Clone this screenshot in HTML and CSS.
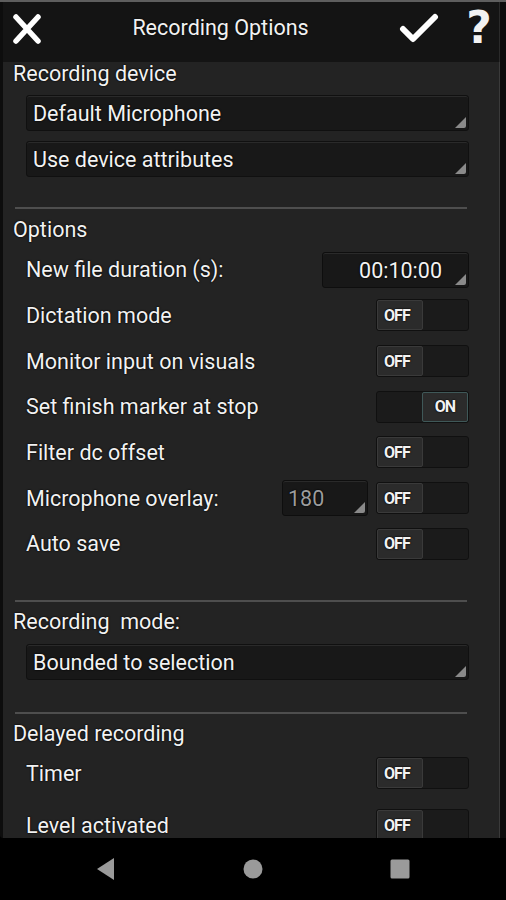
FILE: index.html
```html
<!DOCTYPE html>
<html>
<head>
<meta charset="utf-8">
<link rel="stylesheet" href="styles.css">
</head>
<body>
<div class="screen">
  <div class="topline"></div>
  <div class="dialog">
    <div class="header">
      <svg class="hicon close" width="30" height="32" viewBox="0 0 30 32"><path d="M4 4 L26 28 M26 4 L4 28" stroke="#fff" stroke-width="5.5" stroke-linecap="round" fill="none"/></svg>
      <div class="title">Recording Options</div>
      <svg class="hicon check" width="40" height="30" viewBox="0 0 40 30"><path d="M4 16 L14 26 L36 4" stroke="#fff" stroke-width="6" stroke-linecap="round" stroke-linejoin="round" fill="none"/></svg>
      <div class="help">?</div>
    </div>
    <div class="content">
      <div class="heading h-first">Recording device</div>
      <div class="dropdown dd-1">Default Microphone<span class="corner"></span></div>
      <div class="dropdown dd-2">Use device attributes<span class="corner"></span></div>
      <div class="sep sep-1"></div>
      <div class="heading h-options">Options</div>
      <div class="row">
        <span class="label">New file duration (s):</span>
        <div class="field time">00:10:00<span class="corner"></span></div>
      </div>
      <div class="row">
        <span class="label">Dictation mode</span>
        <div class="toggle"><span class="knob">OFF</span></div>
      </div>
      <div class="row">
        <span class="label">Monitor input on visuals</span>
        <div class="toggle"><span class="knob">OFF</span></div>
      </div>
      <div class="row">
        <span class="label">Set finish marker at stop</span>
        <div class="toggle on"><span class="knob">ON</span></div>
      </div>
      <div class="row">
        <span class="label">Filter dc offset</span>
        <div class="toggle"><span class="knob">OFF</span></div>
      </div>
      <div class="row">
        <span class="label">Microphone overlay:</span>
        <div class="field num">180<span class="corner"></span></div>
        <div class="toggle"><span class="knob">OFF</span></div>
      </div>
      <div class="row">
        <span class="label">Auto save</span>
        <div class="toggle"><span class="knob">OFF</span></div>
      </div>
      <div class="sep sep-2"></div>
      <div class="heading">Recording&nbsp; mode:</div>
      <div class="dropdown dd-3">Bounded to selection<span class="corner"></span></div>
      <div class="sep sep-3"></div>
      <div class="heading h-delayed">Delayed recording</div>
      <div class="row">
        <span class="label">Timer</span>
        <div class="toggle"><span class="knob">OFF</span></div>
      </div>
      <div class="row row-level">
        <span class="label">Level activated</span>
        <div class="toggle"><span class="knob">OFF</span></div>
      </div>
    </div>
  </div>
  <div class="navbar">
    <svg width="20" height="24" viewBox="0 0 20 24"><path d="M18 1 L18 23 L1 12 Z" fill="#9a9a9a"/></svg>
    <svg width="20" height="20" viewBox="0 0 20 20"><circle cx="10" cy="10" r="9.5" fill="#9a9a9a"/></svg>
    <svg width="20" height="20" viewBox="0 0 20 20"><rect x="0.5" y="0.5" width="19" height="19" rx="1.5" fill="#9a9a9a"/></svg>
  </div>
</div>
</body>
</html>
```
FILE: styles.css
```css
* { box-sizing: border-box; }
html, body { margin: 0; padding: 0; background: #000; }
body {
  font-family: Roboto, "Noto Sans", "Liberation Sans", sans-serif;
  color: #f2f2f2;
}
.screen {
  width: 506px;
  height: 900px;
  display: flex;
  flex-direction: column;
  background: #000;
  overflow: hidden;
}
.topline {
  height: 2px;
  background: #5e5e5e;
  flex: none;
}
.dialog {
  height: 836px;
  flex: none;
  display: flex;
  flex-direction: column;
  border-left: 3px solid #0d0d0d;
  border-right: 6px solid #0d0d0d;
  background: #232323;
  overflow: hidden;
  border-bottom-left-radius: 3px;
}
.header {
  height: 60px;
  flex: none;
  background: #141414;
  display: flex;
  align-items: center;
  padding: 0 6px 0 9px;
  border-right: 1px solid #2a2a2a;
}
.hicon { flex: none; display: block; }
.close { margin-top: -6px; }
.title {
  flex: 1;
  text-align: center;
  font-size: 21.5px;
  margin-left: 0;
  margin-top: -9px;
  text-shadow: 0 0 2px #000;
}
.check { margin-right: 26px; margin-top: -8px; }
.help {
  font-family: "DejaVu Sans", sans-serif;
  font-weight: bold;
  font-size: 44px;
  line-height: 54px;
  height: 54px;
  margin-top: -8px;
  width: 28px;
  text-align: center;
}
.content {
  flex: 1;
  display: flex;
  flex-direction: column;
  padding: 0 30px 0 10px;
  border-right: 1px solid #3a3a3a;
  text-shadow: 0 0 2px #000, 0 0 1px #000;
}
.heading {
  height: 26px;
  line-height: 26px;
  font-size: 21.5px;
  flex: none;
}
.h-first { margin-top: -1px; margin-bottom: 1px; }
.h-options { margin-bottom: 4px; }
.h-delayed { margin-bottom: 4px; }
.dropdown {
  position: relative;
  margin-left: 13px;
  height: 36px;
  line-height: 35px;
  padding-left: 6px;
  font-size: 21.5px;
  background: #181818;
  border: 1px solid #101010;
  border-radius: 3px;
  box-shadow: inset 0 1px 0 #2a2a2a;
  flex: none;
}
.dd-1 { margin-top: 7px; }
.dd-2 { margin-top: 10px; }
.dd-3 { margin-top: 9px; }
.corner {
  position: absolute;
  right: 2px;
  bottom: 2px;
  width: 0;
  height: 0;
  border-left: 11px solid transparent;
  border-bottom: 11px solid #8a8a8a;
  border-bottom-right-radius: 2px;
}
.sep {
  height: 2px;
  background: #4e4e4e;
  margin-left: 2px;
  margin-right: 2px;
  flex: none;
}
.sep-1 { margin-top: 30px; margin-bottom: 8px; }
.sep-2 { margin-top: 33px; margin-bottom: 7px; }
.sep-3 { margin-top: 32px; margin-bottom: 7px; }
.row {
  height: 45.67px;
  display: flex;
  align-items: center;
  padding-left: 13px;
  flex: none;
}
.row-level { margin-top: 6px; }
.label {
  flex: 1;
  font-size: 21.5px;
}
.field {
  position: relative;
  height: 36px;
  line-height: 35px;
  font-size: 21.5px;
  background: #181818;
  border: 1px solid #0e0e0e;
  border-radius: 3px;
  box-shadow: inset 0 1px 0 #2a2a2a;
}
.time {
  width: 147px;
  text-align: right;
  padding-right: 26px;
}
.num {
  width: 86px;
  padding-left: 5px;
  color: #9c9c9c;
  margin-right: 8px;
}
.toggle {
  width: 93px;
  height: 32px;
  display: flex;
  background: #1b1b1b;
  border: 1px solid #101010;
  border-radius: 3px;
  flex: none;
}
.toggle.on { justify-content: flex-end; }
.knob {
  width: 46px;
  height: 100%;
  background: #2b2b2b;
  border: 1px solid #3a3a3a;
  border-radius: 2px;
  font-size: 16px;
  font-weight: bold;
  letter-spacing: -0.8px;
  display: flex;
  align-items: center;
  justify-content: center;
  padding-right: 6px;
}
.toggle.on .knob {
  border-color: #3f5858;
  padding-right: 0;
}
.navbar {
  flex: 1;
  display: flex;
  align-items: center;
  justify-content: center;
  gap: 127px;
  background: #000;
}
```
